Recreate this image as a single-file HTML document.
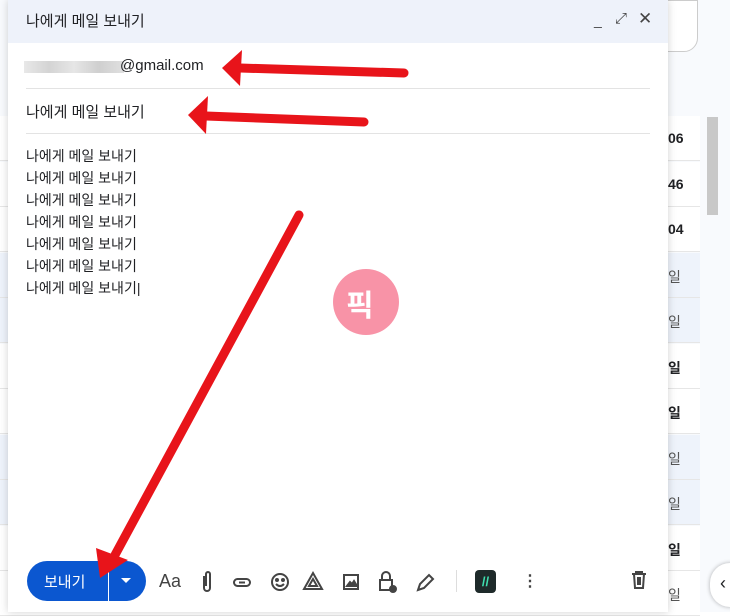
<!DOCTYPE html>
<html><head><meta charset="utf-8"><style>
*{margin:0;padding:0;box-sizing:border-box}
body{width:730px;height:612px;overflow:hidden;background:#fff;font-family:"Liberation Sans","Noto Sans CJK KR",sans-serif;position:relative;color:#202124}
.abs{position:absolute}
.row{position:absolute;left:0;width:700px;height:45px;border-bottom:1px solid #e6e6e6}
.rt{position:absolute;left:668px;font-size:14px;top:14px}
.compose{position:absolute;left:8px;top:0;width:660px;height:612px;background:#fff;border-radius:0 0 0 0;box-shadow:0 0 8px rgba(0,0,0,.18)}
.hdr{height:43px;background:#eef2fa;padding:10px 0 0 18px;font-size:15px;position:relative}
.line{position:absolute;left:18px;right:18px;height:1px;background:#e3e3e3}
.body{position:absolute;left:18px;top:145px;font-size:14px;line-height:22px}
.ic{position:absolute;top:571px}
</style></head><body>
<!-- background list -->
<div class="abs" style="left:0;top:0;width:730px;height:612px;background:#f8fafd"></div>
<div class="abs" style="left:600px;top:0;width:98px;height:52px;border:1px solid #ccc;border-radius:0 0 14px 0;background:#fff"></div>
<div class="row" style="top:116px;background:#fff"><span class="rt" style="font-weight:bold">06</span></div>
<div class="row" style="top:162px;background:#fff"><span class="rt" style="font-weight:bold">46</span></div>
<div class="row" style="top:207px;background:#fff"><span class="rt" style="font-weight:bold">04</span></div>
<div class="row" style="top:253px;background:#eef3fb"><span class="rt" style="color:#555">일</span></div>
<div class="row" style="top:298px;background:#eef3fb"><span class="rt" style="color:#555">일</span></div>
<div class="row" style="top:344px;background:#fff"><span class="rt" style="font-weight:bold">일</span></div>
<div class="row" style="top:389px;background:#fff"><span class="rt" style="font-weight:bold">일</span></div>
<div class="row" style="top:435px;background:#eef3fb"><span class="rt" style="color:#555">일</span></div>
<div class="row" style="top:480px;background:#eef3fb"><span class="rt" style="color:#555">일</span></div>
<div class="row" style="top:526px;background:#fff"><span class="rt" style="font-weight:bold">일</span></div>
<div class="row" style="top:571px;background:#fff"><span class="rt" style="color:#555">일</span></div>
<div class="abs" style="left:707px;top:117px;width:11px;height:98px;background:#c8c8c8"></div>
<div class="abs" style="left:710px;top:563px;width:40px;height:44px;border-radius:22px;background:#fff;box-shadow:0 0 4px rgba(0,0,0,.3);font-size:18px;padding:10px 0 0 10px">&lsaquo;</div>

<div class="compose">
 <div class="hdr">나에게 메일 보내기
  <span class="abs" style="left:586px;top:12px;font-size:14px;color:#444">_</span>
  <span class="abs" style="left:607px;top:10px;font-size:15px;color:#444">⤢</span>
  <span class="abs" style="left:630px;top:9px;font-size:17px;color:#444">✕</span>
 </div>
 <div class="abs" style="left:16px;top:61px;width:100px;height:12px;background:linear-gradient(90deg,#e8e8e8,#d4d4d4,#e6e6e6,#cfcfcf,#e0e0e0)"></div>
 <div class="abs" style="left:112px;top:57px;font-size:15px">@gmail.com</div>
 <div class="line" style="top:88px"></div>
 <div class="abs" style="left:18px;top:101px;font-size:15px">나에게 메일 보내기</div>
 <div class="line" style="top:133px"></div>
 <div class="body">나에게 메일 보내기<br>나에게 메일 보내기<br>나에게 메일 보내기<br>나에게 메일 보내기<br>나에게 메일 보내기<br>나에게 메일 보내기<br>나에게 메일 보내기|</div>
</div>

<!-- toolbar (page coords) -->
<div class="abs" style="left:27px;top:561px;width:119px;height:40px;border-radius:20px;background:#0b57d0"></div>
<div class="abs" style="left:44px;top:571px;color:#fff;font-size:15px">보내기</div>
<div class="abs" style="left:108px;top:561px;width:1px;height:40px;background:#fff"></div>
<div class="abs" style="left:121px;top:578px;border:5px solid transparent;border-top:5px solid #fff"></div>
<div class="ic" style="left:159px;font-size:18px;color:#444">Aa</div>
<svg class="abs" style="left:196px;top:568px" width="280" height="28" fill="none" stroke="#444" stroke-width="2">
 <path d="M8 8v12a3 3 0 0 0 6 0V6a2 2 0 0 0-4 0v12"/>
 <rect x="38" y="11" width="16" height="7" rx="3.5"/><path d="M43 14.5h6"/>
 <circle cx="84" cy="14" r="8"/><circle cx="81" cy="12" r="1" fill="#444"/><circle cx="87" cy="12" r="1" fill="#444"/><path d="M80 16q4 4 8 0"/>
 <path d="M117 5l9 16h-18z"/><path d="M117 11l4 7h-8z"/>
 <rect x="148" y="7" width="14" height="14"/><path d="M151 18l3-4 2 2 2-3 3 5z" fill="#444"/>
 <rect x="184" y="12" width="12" height="10"/><path d="M186 12V8a4 4 0 0 1 8 0v4"/><circle cx="197" cy="21" r="3" fill="#444"/>
 <path d="M222 22l2-6 9-9 4 4-9 9z"/>
</svg>
<div class="abs" style="left:456px;top:570px;width:1px;height:22px;background:#ddd"></div>
<div class="abs" style="left:475px;top:570px;width:21px;height:23px;border-radius:4px;background:#1e2a2a;color:#3fe0b0;font-size:13px;font-weight:bold;text-align:center;line-height:23px">//</div>
<div class="ic" style="left:522px;font-size:16px;color:#444;font-weight:bold">⋮</div>
<svg class="abs" style="left:629px;top:570px" width="20" height="20" fill="none" stroke="#444" stroke-width="2"><path d="M3 4h14M7 4V2h6v2M5 4l1 14h8l1-14M9 7v8M11 7v8"/></svg>

<!-- watermark -->
<svg class="abs" style="left:326px;top:266px" width="80" height="72"><circle cx="40" cy="36" r="33" fill="#f7879d" opacity=".9"/></svg>
<div class="abs" style="left:346px;top:281px;color:#fff;font-size:30px;font-weight:bold">픽</div>

<!-- arrows -->
<svg class="abs" style="left:0;top:0" width="730" height="612">
 <g stroke="#e8141a" stroke-width="9" stroke-linecap="round" fill="#e8141a">
  <line x1="404" y1="73" x2="240" y2="68"/>
  <line x1="364" y1="122" x2="206" y2="116"/>
  <line x1="299" y1="215" x2="115" y2="555"/>
 </g>
 <g fill="#e8141a">
  <polygon points="222,68 242,50 240,86"/>
  <polygon points="188,115 208,96 206,134"/>
  <polygon points="100,578 96,548 128,560"/>
 </g>
</svg>
</body></html>
